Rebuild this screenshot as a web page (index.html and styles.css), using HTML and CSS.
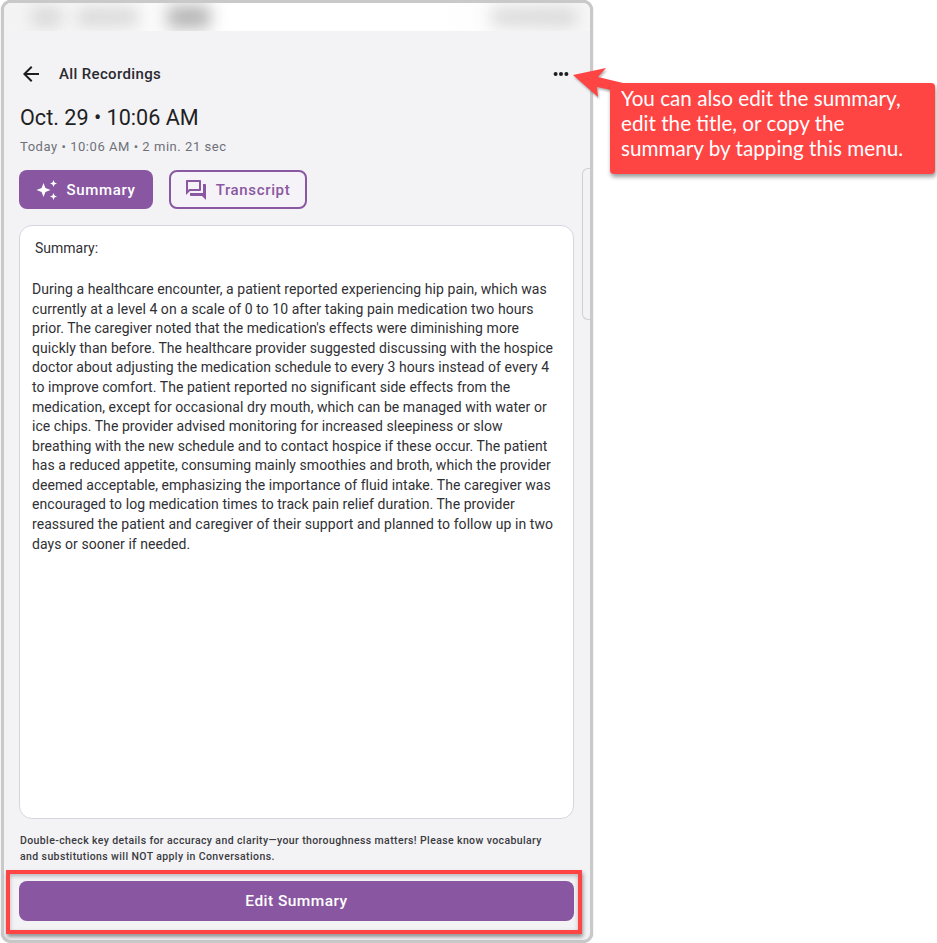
FILE: index.html
```html
<!DOCTYPE html>
<html lang="en">
<head>
<meta charset="utf-8">
<title>All Recordings</title>
<link rel="stylesheet" href="styles.css">
</head>
<body>
<div class="page">
  <div class="device">
    <div class="statusbar">
      <span class="blob b1"></span><span class="blob b2"></span><span class="blob b3"></span><span class="blob b4"></span>
    </div>
    <div class="content">
      <div class="topbar">
        <svg class="back" width="24" height="24" viewBox="0 0 24 24"><path d="M20 11H7.83l5.59-5.59L12 4l-8 8 8 8 1.41-1.41L7.83 13H20z" fill="#1d1d22"/></svg>
        <span class="topbar-title">All Recordings</span>
        <svg class="more" width="16" height="6" viewBox="0 0 16 6"><circle cx="2.6" cy="3" r="2" fill="#1d1d22"/><circle cx="8" cy="3" r="2" fill="#1d1d22"/><circle cx="13.4" cy="3" r="2" fill="#1d1d22"/></svg>
      </div>
      <h1 class="title">Oct. 29 • 10:06 AM</h1>
      <p class="meta">Today • 10:06 AM • 2 min. 21 sec</p>
      <div class="tabs">
        <button class="tab tab-on">
          <svg width="24" height="24" viewBox="0 0 24 24"><path d="M8.500 5l1.900 5.100 5.100 1.900-5.100 1.900-1.900 5.100-1.900-5.100-5.100-1.900 5.100-1.900z M18.500 2l1 2.500 2.500 1-2.500 1-1 2.500-1-2.500-2.500-1 2.500-1z M18.500 15l1 2.500 2.500 1-2.500 1-1 2.500-1-2.500-2.500-1 2.500-1z" fill="#fff"/></svg>
          Summary
        </button>
        <button class="tab tab-off">
          <svg width="24" height="24" viewBox="0 0 24 24"><path d="M15 4v7H5.170L4 12.170V4h11m1-2H3c-.55 0-1 .45-1 1v14l4-4h10c.55 0 1-.45 1-1V3c0-.55-.45-1-1-1zm5 4h-2v9H6v2c0 .55.45 1 1 1h11l4 4V7c0-.55-.45-1-1-1z" fill="#8a58a2"/></svg>
          Transcript
        </button>
      </div>
      <div class="card">
        <p class="summary-head">Summary:</p>
        <p class="summary">During a healthcare encounter, a patient reported experiencing hip pain, which was currently at a level 4 on a scale of 0 to 10 after taking pain medication two hours prior. The caregiver noted that the medication's effects were diminishing more quickly than before. The healthcare provider suggested discussing with the hospice doctor about adjusting the medication schedule to every 3 hours instead of every 4 to improve comfort. The patient reported no significant side effects from the medication, except for occasional dry mouth, which can be managed with water or ice chips. The provider advised monitoring for increased sleepiness or slow breathing with the new schedule and to contact hospice if these occur. The patient has a reduced appetite, consuming mainly smoothies and broth, which the provider deemed acceptable, emphasizing the importance of fluid intake. The caregiver was encouraged to log medication times to track pain relief duration. The provider reassured the patient and caregiver of their support and planned to follow up in two days or sooner if needed.</p>
      </div>
      <p class="note">Double-check key details for accuracy and clarity—your thoroughness matters! Please know vocabulary and substitutions will NOT apply in Conversations.</p>
      <div class="footer"><button class="edit">Edit Summary</button></div>
    </div>
    <div class="handle"></div>
  </div>
  <svg class="arrow" width="60" height="40" viewBox="0 0 60 40"><polygon points="2,11 35,4 27,13 52,19 40,26 26,23 27,33" fill="#ff4444"/></svg>
  <div class="callout">You can also edit the summary, edit the title, or copy the summary by tapping this menu.</div>
  <div class="highlight"></div>
</div>
</body>
</html>
```
FILE: styles.css
```css
* { box-sizing: border-box; }
html, body { margin: 0; padding: 0; background: #fff; }
body { font-family: Roboto, "Liberation Sans", sans-serif; color: #1d1d22; }
.page { position: relative; width: 937px; height: 943px; overflow: hidden; padding-left: 1px; }
.device {
  position: relative;
  width: 592px; height: 943px;
  border: 3px solid #c9c9c9;
  border-radius: 10px;
  background: #f3f3f6;
  overflow: hidden;
  box-shadow: 0 0 1px #999;
}
.statusbar {
  height: 28px;
  background: linear-gradient(90deg, #f3f3f3, #fff 40%, #fff 75%, #f6f6f6);
  display: flex;
  align-items: center;
  overflow: hidden;
}
.blob { display: block; height: 18px; background: #c4c4c4; filter: blur(8px); opacity: .6; }
.b1 { width: 30px; margin-left: 28px; }
.b2 { width: 60px; margin-left: 16px; }
.b3 { width: 42px; margin-left: 30px; background: #a8a8a8; opacity: .85; height: 22px; }
.b4 { width: 84px; margin-left: 282px; }
.content { padding: 0 16px 0 15px; display: flex; flex-direction: column; }
.topbar { display: flex; align-items: center; height: 24px; margin-top: 31px; }
.back { flex: none; }
.topbar-title { margin-left: 16px; font-size: 15px; font-weight: 500; color: #2a2a30; letter-spacing: .35px; }
.more { margin-left: auto; margin-right: 5px; }
.title { margin: 17px 0 0 1px; font-size: 21.600px; line-height: 30px; font-weight: 400; color: #1f1f24; }
.meta { margin: 5px 0 0 1px; font-size: 13px; line-height: 18px; color: #6f7178; letter-spacing: .54px; }
.tabs { display: flex; gap: 16px; margin-top: 14px; }
.tab {
  height: 39px; border-radius: 8px;
  font-family: Roboto, sans-serif; font-size: 15px; font-weight: 500; letter-spacing: .65px;
  display: flex; align-items: center; gap: 8px; justify-content: center; padding: 0 2px 0 0;
}
.tab-on { width: 134px; background: #8957a1; color: #fff; border: none; }
.tab-off { width: 138px; background: #f6f3f8; color: #8a58a2; border: 2px solid #8a58a2; }
.card {
  margin-top: 16px;
  height: 594px;
  background: #fff;
  border: 1px solid #d5d5de;
  border-radius: 13px;
  padding: 13px 12px;
}
.summary-head { margin: 0 0 21.600px; padding-left: 3px; font-size: 14px; line-height: 19.600px; color: #303035; }
.summary { margin: 0; font-size: 14px; line-height: 19.570px; color: #303035; letter-spacing: .06px; }
.note { margin: 14px 20px 0 1px; font-size: 10.500px; line-height: 16px; font-weight: 500; color: #3a3a40; letter-spacing: .39px; }
.footer { margin-top: 16px; }
.edit {
  display: block; width: 100%; height: 40px; border: none; border-radius: 8px;
  background: #8957a1; color: #fff;
  font-family: Roboto, sans-serif; font-size: 15.500px; font-weight: 500; letter-spacing: .45px;
}
.handle { position: absolute; left: 578px; top: 165px; width: 8px; height: 152px; border: 1px solid #cfcfd6; border-right: none; border-radius: 6px 0 0 6px; }
.arrow { position: absolute; left: 571px; top: 64px; filter: drop-shadow(1px 2px 1px rgba(0,0,0,.3)); }
.callout {
  position: absolute; left: 610px; top: 83px; width: 325px; height: 91px;
  padding: 3px 11px;
  background: #ff4444; color: #fff; border-radius: 4px;
  font-family: Lato, sans-serif; font-size: 20.700px; line-height: 25px;
  box-shadow: 1px 3px 4px rgba(0,0,0,.4);
}
.highlight {
  position: absolute; left: 6px; top: 870px; width: 576px; height: 64px;
  border: 4px solid #ff4444;
  box-shadow: 1px 3px 4px rgba(0,0,0,.4), inset 0 2px 4px rgba(0,0,0,.25);
}
```
